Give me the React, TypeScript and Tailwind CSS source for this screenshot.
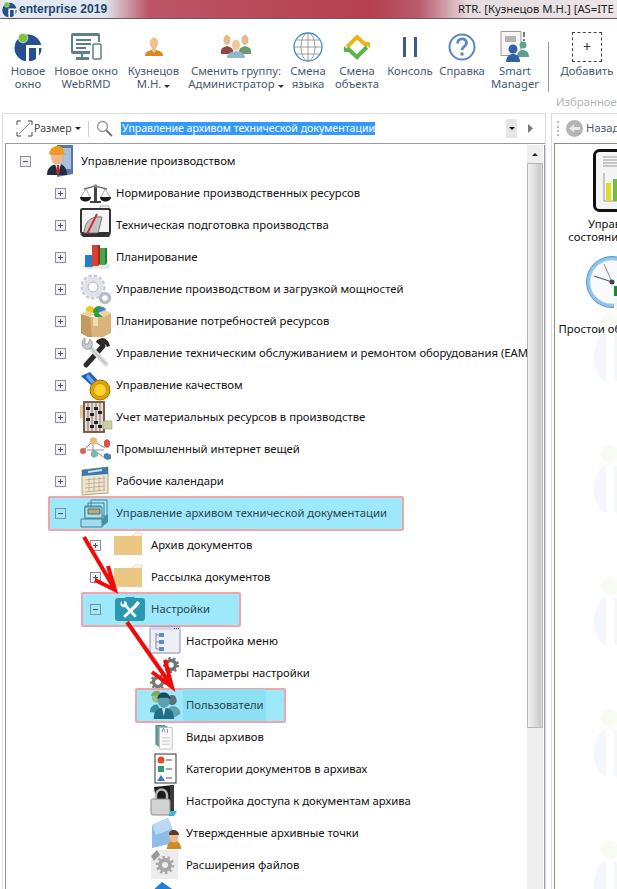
import React from "react";

const Plus = ({ open, tone }: { open?: boolean; tone?: boolean }) => (
  <svg width="11" height="11" viewBox="0 0 11 11" className="shrink-0">
    <rect x="0.5" y="0.5" width="10" height="10" fill={tone ? "#a6e6f5" : "#f2f2f4"} stroke={tone ? "#6d9aa6" : "#8e8e9a"} />
    <path d={open ? "M3 5.5h5" : "M3 5.5h5M5.5 3v5"} stroke="#44566e" fill="none" />
  </svg>
);

const Tri = ({ c = "#222" }: { c?: string }) => (
  <svg width="6" height="3" viewBox="0 0 6 3" className="inline-block shrink-0"><path d="M0 0h6L3 3z" fill={c} /></svg>
);

const I = ({ children }: { children: React.ReactNode }) => (
  <svg width="32" height="32" viewBox="0 0 32 32" className="shrink-0 overflow-visible">{children}</svg>
);

const Worker = () => (<I>
  <path d="M12 0h16v29l-16 3z" fill="#5677a8" /><path d="M14 3h12v21H14z" fill="#a9bfdc" />
  <path d="M2 30c0-8 5-10 10-11s10 3 10 11z" fill="#222c3c" /><path d="M10 19l3 10 3-10z" fill="#f2f2f2" /><path d="M12 20h2l1 8-2 2-2-2z" fill="#b02c2c" />
  <ellipse cx="12" cy="12" rx="6" ry="7.500" fill="#eeb68a" /><path d="M4 9c1-7 6-8 9-8s6 3 6 7l3 1-7 1H6z" fill="#f09a24" />
</I>);
const Scales = () => (<I>
  <path d="M14 9h3v15h-3zM10 24h11v2H10z" fill="#444" /><path d="M4 12l11-3 12 3" stroke="#777" strokeWidth="1.500" fill="none" />
  <path d="M6 12L1 20M6 12l4 8M25 12l-4 8M25 12l5 8" stroke="#888" strokeWidth=".7" />
  <path d="M0 20h11c0 6-11 6-11 0zM20 20h11c0 6-11 6-11 0z" fill="#1b1b1b" /><circle cx="15.500" cy="9" r="1.800" fill="#888" />
</I>);
const Tech = () => (<I>
  <path d="M20-3h9v4h-9z" fill="#fff" stroke="#aaa" />
  <rect x="1" y="0" width="29" height="24" rx="1.500" fill="#f5f5f5" stroke="#333" strokeWidth="2" />
  <path d="M4 24C5 11 12 7 22 8l-4 16z" fill="#c5c5c5" stroke="#777" /><path d="M6 27L17 5" stroke="#cf3030" strokeWidth="2" />
  <path d="M0 25l31-1-2 4H3z" fill="#333" />
</I>);
const Bars = () => (<I>
  <path d="M2 25l6-5h17l6 5-3 3H5z" fill="#e7e7e7" />
  <path d="M5 14h7v12H5z" fill="#1f7fc8" /><path d="M12 14h2v10l-2 2z" fill="#125c94" />
  <path d="M12 4h6v21h-6z" fill="#d8422c" /><path d="M18 4h2v19l-2 2z" fill="#9c2a1a" />
  <path d="M20 7h5v17h-5z" fill="#48a84c" /><path d="M25 7h2v15l-2 2z" fill="#2f7a33" />
</I>);
const Gears = () => (<I>
  <circle cx="13" cy="14" r="9.500" fill="none" stroke="#c6ccd6" strokeWidth="6" strokeDasharray="3 1.500" />
  <circle cx="13" cy="14" r="8" fill="none" stroke="#dfe3ea" strokeWidth="5" /><circle cx="13" cy="14" r="5" fill="#fff" stroke="#a8b0bc" />
  <circle cx="25" cy="25" r="4.500" fill="none" stroke="#b8bec8" strokeWidth="3.500" />
</I>);
const Box = () => (<I>
  <circle cx="10" cy="5" r="4" fill="#e8c91e" /><circle cx="19" cy="7" r="6" fill="#2f9a3c" /><circle cx="22" cy="6" r="4" fill="#3b86d6" />
  <path d="M1 9l9 3h13l8-4v20l-8 4H8L1 28z" fill="#d9b47c" /><path d="M1 9l9 3 2 20H8l-7-4z" fill="#c49a5e" /><path d="M13 12h5v9h-5z" fill="#f1dcb4" />
  <path d="M1 9l6-3 8 2-4 4z" fill="#ecd3a0" /><path d="M31 8l-6-3-7 3 5 4z" fill="#ecd3a0" />
</I>);
const Tools = () => (<I>
  <path d="M6 28L23 9" stroke="#2b2b2b" strokeWidth="5" strokeLinecap="round" /><path d="M17 3l5-2c4 0 7 3 8 8l-3 1-2-3-3 3-6-5z" fill="#2a2a2a" />
  <path d="M9 9l17 18" stroke="#d8dcdf" strokeWidth="5" strokeLinecap="round" /><path d="M10 10l16 17" stroke="#9aa0a6" strokeWidth=".8" />
  <path d="M5 1a6.500 6.500 0 0 0-2 9c2 2.500 5 3 8 1 2-3 2-6-1-9l-2 5H5z" fill="#c8ccd0" stroke="#777" strokeWidth=".6" />
</I>);
const Medal = () => (<I>
  <path d="M1 7L10 3l11 12-6 5z" fill="#1d62c4" /><path d="M8 5l7 8-3 2-6-7z" fill="#6fa5ea" />
  <circle cx="20" cy="21" r="10" fill="#e4a400" stroke="#9a6a00" /><circle cx="20" cy="21" r="6.500" fill="#ffd42a" stroke="#c88c00" />
</I>);
const Abacus = () => (<I>
  <path d="M0 4h6v13H0z" fill="#e8c69a" /><rect x="4" y="1" width="20" height="30" fill="#e8dcd0" stroke="#6f4d3c" strokeWidth="1.800" />
  <path d="M8 2v28M12 2v28M16 2v28M20 2v28" stroke="#777" /><path d="M6 6h4v3H6zM10 12h4v3h-4zM14 6h4v3h-4zM18 10h4v3h-4zM6 17h4v3H6zM14 20h4v3h-4zM10 24h4v3h-4zM18 24h4v3h-4z" fill="#222" />
  <path d="M23 20h9v8h-9z" fill="#cfcf9c" stroke="#888" strokeWidth=".5" />
</I>);
const Net = () => (<I>
  <path d="M3 18L13 8l12 7M13 8v9M7 17h17M13 17l12 8M13 17v6" stroke="#8d8d8d" fill="none" />
  <path d="M10 6l3-2 4 2v4l-4 2-3-2z" fill="#e8b97a" /><path d="M24 8l3-2 3 2v5l-3 2-3-2z" fill="#d9534a" /><circle cx="3" cy="18" r="3" fill="#d9634f" />
  <path d="M11 19l3-2 4 2v4l-4 2-3-2z" fill="#7fb8a8" /><path d="M24 21l3-1 4 2v4l-4 1-3-2z" fill="#4a80b8" />
</I>);
const Cal = () => (<I>
  <path d="M2 5l26-3v26L2 30z" fill="#f0e6cf" stroke="#b89f78" /><path d="M2 5l26-3v7L2 11z" fill="#3a78b4" />
  <path d="M5 15l20-2M5 19l20-2M5 23l20-2M5 27l20-2M9 13v14M14 12v15M19 12v14M24 11v15" stroke="#b3a88f" strokeWidth=".8" fill="none" />
  <path d="M8 6l14-2v2L8 8z" fill="#cfe0f0" />
</I>);
const Archive = () => (<I>
  <g fill="none" stroke="#4d7f92" strokeWidth="1"><path d="M11 3h16v16H11zM8 6h16v16H8zM5 9h16v14H5z" /></g>
  <path d="M5 10h17v11H5z" fill="#a6e6f5" stroke="#4d7f92" /><path d="M8 12h12v5H8z" fill="#c0a870" stroke="#4d6f78" />
  <path d="M1 22h21v8H1z" fill="#9fdef0" stroke="#4d7f92" /><path d="M22 22l6-5v8l-6 5z" fill="#4a8ea4" />
</I>);
const Folder = () => (<I>
  <path d="M-1 7h18l3-3h7v22H-1z" fill="#eac883" /><path d="M17 7l3-3h7v3z" fill="#fff" stroke="#e0c080" strokeWidth=".6" />
</I>);
const Wrench = () => (<I>
  <path d="M3 5h7l1-1h8l1 1h7a3 3 0 0 1 3 3v17a3 3 0 0 1-3 3H3a3 3 0 0 1-3-3V8a3 3 0 0 1 3-3z" fill="#2b97b2" />
  <path d="M7 8a4 4 0 0 0-1 5c1.500 1.500 3 1.500 4 1l9 10c2 1 3-.5 2-2l-9-10c.5-2-1-4-3-4v3H7z" fill="#f4fbfd" />
  <path d="M8 23l11-11 3-4 3 2-3 4L10 25z" fill="#f4fbfd" />
</I>);
const Menu = () => (<I>
  <rect x="0" y="2" width="30" height="26" rx="1" fill="#eeeef6" stroke="#8e8ab0" /><path d="M0 2h30v3H0z" fill="#d8d6ea" /><path d="M24 3.500h1M26 3.500h1M28 3.500h1" stroke="#555" />
  <path d="M6 8v16M6 10h5M6 17h5M6 24h5" stroke="#8a8a9a" fill="none" /><path d="M9 8h5v4H9zM9 15h5v4H9zM9 22h5v4H9z" fill="#5b8fca" />
</I>);
const Cogs = () => (<I>
  <circle cx="21" cy="8" r="4.500" fill="none" stroke="#717171" strokeWidth="3.500" /><circle cx="21" cy="8" r="7" fill="none" stroke="#717171" strokeWidth="2" strokeDasharray="2.500 2.500" />
  <circle cx="8" cy="25" r="4.500" fill="none" stroke="#777" strokeWidth="3.500" /><circle cx="8" cy="25" r="7" fill="none" stroke="#777" strokeWidth="2" strokeDasharray="2.500 2.500" />
</I>);
const Users = () => (<I>
  <g transform="translate(0,1) scale(.92,.85)">
    <ellipse cx="24" cy="12" rx="5" ry="6" fill="#5b6f78" /><path d="M18 30c0-8 3-11 7-11s8 3 8 9l-6 4z" fill="#5fa2ac" />
    <ellipse cx="7" cy="9" rx="5" ry="6" fill="#9bc07e" /><path d="M1 7c1-5 5-6 7-6s4 2 4 5z" fill="#80a866" />
    <path d="M0 26c0-7 4-9 8-9l6 11z" fill="#3d8ca0" />
    <path d="M4 34c0-10 5-13 11-13s11 3 11 13z" fill="#1f6f86" /><path d="M13 21l2 10 2-10z" fill="#bfe4e8" />
    <ellipse cx="15" cy="13" rx="6.500" ry="8" fill="#5aa3ae" /><path d="M8 11c0-6 4-8 7-8s7 2 7 8l-3-2h-8z" fill="#144b5a" />
  </g>
</I>);
const Sheets = () => (<I>
  <g transform="translate(3,4) scale(.8)">
    <path d="M3 0h12v25H3z" fill="#5c86b8" /><path d="M5 1h13v26H5z" fill="#6aa884" /><path d="M8 3h16v27H8z" fill="#fbfbfb" stroke="#b8b8b8" />
    <path d="M11 9l2-5 2 5" stroke="#4a80c0" fill="none" /><path d="M18 5v5" stroke="#d05a50" /><path d="M11 16h10M11 20h10M11 24h10" stroke="#b5b5b5" />
  </g>
</I>);
const Cats = () => (<I>
  <g transform="translate(4,1)">
    <rect x="1" y="0" width="21" height="29" fill="#fff" stroke="#333" />
    <circle cx="7" cy="6" r="3.500" fill="#d9502e" /><path d="M4 12h6v6H4z" fill="#2e9a82" /><path d="M7 21l4 6H3z" fill="#3f78b8" /><path d="M12 6h6M12 15h6M12 24h6" stroke="#555" />
  </g>
</I>);
const Lock = () => (<I>
  <path d="M4 2l20-2v26L8 29z" fill="#1a1a1a" /><path d="M20 0h4v26h-4z" fill="#3a3a3a" />
  <path d="M6 14v-4a5.500 5.500 0 0 1 11 0v4" fill="none" stroke="#b6b6b6" strokeWidth="2.500" /><rect x="1" y="14" width="19" height="16" rx="2" fill="#d2d2d2" stroke="#8c8c8c" />
  <path d="M22 26h5l-3 5h-6z" fill="#37b6d6" />
</I>);
const Points = () => (<I>
  <path d="M2 8L18 1l10 24-26 6z" fill="#8fbde6" /><path d="M2 8l16-7 4 11-16 6z" fill="#b9d8f2" />
  <path d="M17 32c0-6 3-8 7-8s7 2 7 8z" fill="#d08a22" /><ellipse cx="24" cy="20" rx="4.500" ry="5.500" fill="#eeb98c" /><path d="M19 18c0-4 3-5 5-5s5 2 5 5z" fill="#5a3a24" />
</I>);
const FileCog = () => (<I>
  <path d="M1 7l6-6h21v29H1z" fill="#ececec" /><path d="M1 7l6-6 3 5-6 6z" fill="#9a9a9a" />
  <circle cx="15" cy="16" r="5" fill="none" stroke="#a6a6a6" strokeWidth="4" /><circle cx="15" cy="16" r="8" fill="none" stroke="#a6a6a6" strokeWidth="2.500" strokeDasharray="2.500 2.500" />
</I>);
const BlueTop = () => (<I><path d="M0 12L12 1l13 9v22H0z" fill="#1d7fd6" /></I>);

type R = { l: 0 | 1 | 2 | 3; t: string; icon: React.ReactNode; e?: "p" | "m"; hl?: string; inner?: boolean };

const rows: R[] = [
  { l: 0, t: "Управление производством", icon: <Worker />, e: "m" },
  { l: 1, t: "Нормирование производственных ресурсов", icon: <Scales />, e: "p" },
  { l: 1, t: "Техническая подготовка производства", icon: <Tech />, e: "p" },
  { l: 1, t: "Планирование", icon: <Bars />, e: "p" },
  { l: 1, t: "Управление производством и загрузкой мощностей", icon: <Gears />, e: "p" },
  { l: 1, t: "Планирование потребностей ресурсов", icon: <Box />, e: "p" },
  { l: 1, t: "Управление техническим обслуживанием и ремонтом оборудования (EAM)", icon: <Tools />, e: "p" },
  { l: 1, t: "Управление качеством", icon: <Medal />, e: "p" },
  { l: 1, t: "Учет материальных ресурсов в производстве", icon: <Abacus />, e: "p" },
  { l: 1, t: "Промышленный интернет вещей", icon: <Net />, e: "p" },
  { l: 1, t: "Рабочие календари", icon: <Cal />, e: "p" },
  { l: 1, t: "Управление архивом технической документации", icon: <Archive />, e: "m", hl: "left-[42px] w-[356px]" },
  { l: 2, t: "Архив документов", icon: <Folder />, e: "p" },
  { l: 2, t: "Рассылка документов", icon: <Folder />, e: "p" },
  { l: 2, t: "Настройки", icon: <Wrench />, e: "m", hl: "left-[75px] w-[160px]" },
  { l: 3, t: "Настройка меню", icon: <Menu /> },
  { l: 3, t: "Параметры настройки", icon: <Cogs /> },
  { l: 3, t: "Пользователи", icon: <Users />, hl: "left-[129px] w-[151px]", inner: true },
  { l: 3, t: "Виды архивов", icon: <Sheets /> },
  { l: 3, t: "Категории документов в архивах", icon: <Cats /> },
  { l: 3, t: "Настройка доступа к документам архива", icon: <Lock /> },
  { l: 3, t: "Утвержденные архивные точки", icon: <Points /> },
  { l: 3, t: "Расширения файлов", icon: <FileCog /> },
  { l: 3, t: "", icon: <BlueTop /> },
];

const pad = ["pl-[14px]", "pl-[49px]", "pl-[84px]", "pl-[119px]"];

const Row = ({ r }: { r: R }) => (
  <div className={`relative flex h-8 items-center ${pad[r.l]}`}>
    {r.hl && <div className={`absolute top-[-1px] h-[35px] rounded-[2px] border-2 border-[#f0a6a8] bg-[#9de8fb] ${r.hl}`} />}
    {r.inner && <div className="absolute left-[177px] top-0 h-8 w-[83px] bg-[#8ddff3]" />}
    <div className="relative flex w-[11px] shrink-0 items-center">{r.e && <Plus open={r.e === "m"} tone={!!r.hl} />}</div>
    <div className="relative ml-[14px] flex w-[30px] shrink-0 items-center">{r.icon}</div>
    <span className={`relative ml-[6px] whitespace-nowrap text-[11.3px] ${r.hl ? "text-[#2c4650]" : "text-[#111]"}`}>{r.t}</span>
  </div>
);

const Tool = ({ w, icon, a, b, caret }: { w: string; icon: React.ReactNode; a: string; b?: string; caret?: boolean }) => (
  <div className={`flex shrink-0 flex-col items-center pt-[11px] ${w}`}>
    <div className="flex h-[33px] items-center justify-center">{icon}</div>
    <div className="mt-px text-center text-[11.3px] leading-[13px] text-[#4a5a70] whitespace-nowrap">
      <div>{a}</div>
      {b && <div>{b}{caret && <span className="ml-[3px] inline-block align-middle"><Tri c="#333" /></span>}</div>}
    </div>
  </div>
);

const Logo = ({ s = 28 }: { s?: number }) => (
  <svg width={s} height={s} viewBox="0 0 28 28">
    <circle cx="14" cy="15" r="13.500" fill="#24508f" />
    <path d="M12 12h16v3H25v14h-3V15h-7v14h-3z" fill="#fff" />
    <circle cx="9" cy="5" r="4.800" fill="#7fc241" stroke="#fff" strokeWidth=".6" />
  </svg>
);

const WebRmd = () => (
  <svg width="32" height="27" viewBox="0 0 32 27">
    <path d="M3 0h25a2 2 0 0 1 2 2v7h-2V3H3v15h17v3h-7v3h6v3H6v-3h5v-3H3a2 2 0 0 1-2-2V2a2 2 0 0 1 2-2z" fill="#5d7f91" />
    <path d="M6 6h15v2H6zM6 10h15v2H6zM6 14h10v2H6z" fill="#5d7f91" />
    <rect x="23" y="11" width="8" height="15" rx="1" fill="#fff" stroke="#5d7f91" strokeWidth="1.500" />
  </svg>
);
const Person = () => (
  <svg width="20" height="20" viewBox="0 0 20 20">
    <path d="M1 19c0-4 3-5 9-7 6 2 9 3 9 7z" fill="#d68a1e" />
    <ellipse cx="10" cy="6" rx="4" ry="5.500" fill="#efc08e" /><path d="M8 10h4v4l-2 2-2-2z" fill="#efc08e" />
  </svg>
);
const Group = () => (
  <svg width="30" height="24" viewBox="0 0 30 24">
    <path d="M0 16c0-3 3-4 6-5 3 1 6 2 6 5v3H0z" fill="#924645" /><ellipse cx="6" cy="5" rx="3.500" ry="5" fill="#e4bb8c" />
    <path d="M18 16c0-3 3-4 6-5 3 1 6 2 6 5v3H18z" fill="#6d9a74" /><ellipse cx="24" cy="5" rx="3.500" ry="5" fill="#e4bb8c" />
    <path d="M6 23c0-5 4-6 9-7 5 1 9 2 9 7z" fill="#8eb8cc" /><ellipse cx="15" cy="10" rx="4" ry="5.500" fill="#eec79c" />
  </svg>
);
const Globe = () => (
  <svg width="30" height="30" viewBox="0 0 30 30" fill="none" stroke="#3d8fd0">
    <circle cx="15" cy="15" r="14" strokeWidth="1.300" /><ellipse cx="15" cy="15" rx="7" ry="14" stroke="#888" strokeWidth=".8" /><path d="M15 1v28M1 15h28M3 8h24M3 22h24" stroke="#888" strokeWidth=".8" />
  </svg>
);
const Obj = () => (
  <svg width="28" height="28" viewBox="0 0 28 28" fill="none">
    <path d="M4 14L14 4l10 9" stroke="#e8b619" strokeWidth="4" /><path d="M20 9h7l0 6z" fill="#e8b619" />
    <path d="M24 14L14 24 4 15" stroke="#5cb54a" strokeWidth="4" /><path d="M8 19H1l0-6z" fill="#5cb54a" />
  </svg>
);
const Pause = () => (
  <svg width="14" height="20" viewBox="0 0 14 20"><path d="M0 0h3v20H0zM11 0h3v20h-3z" fill="#40588e" /></svg>
);
const Help = () => (
  <svg width="28" height="28" viewBox="0 0 28 28">
    <circle cx="14" cy="14" r="12.500" fill="#fff" stroke="#5a87c8" strokeWidth="2" />
    <path d="M9.500 10.500c.5-6 9-6 9 -.5 0 3.500-4.500 3.500-4.500 7" fill="none" stroke="#5a87c8" strokeWidth="2.800" /><circle cx="14" cy="21" r="1.800" fill="#5a87c8" />
  </svg>
);
const Smart = () => (
  <svg width="30" height="31" viewBox="0 0 30 31">
    <path d="M1 .5h20v24H1z" fill="#f5f5f5" stroke="#999" /><path d="M5 5h11v6H5z" fill="#b5b5b5" /><path d="M23 1h2v5h-2zM23 8h2v2h-2z" fill="#777" />
    <path d="M17 26c0-5 3-7 6-7s6 2 6 7z" fill="#5fa08e" /><circle cx="23" cy="14" r="3.500" fill="#5fa08e" />
    <path d="M6 31c0-6 4-8 7-8s7 2 7 8z" fill="#2f62a8" /><circle cx="13" cy="18" r="4.500" fill="#2f62a8" />
  </svg>
);
const Add = () => (
  <div className="flex h-[30px] w-[30px] items-center justify-center border border-dashed border-[#444] text-[14px] leading-none text-[#333]">+</div>
);

const Mark = () => (
  <svg width="40" height="70" viewBox="0 0 40 70" className="block">
    <circle cx="30" cy="9" r="9" fill="#f8fbf1" />
    <path d="M14 44c0-14 6-22 12-24v48C19 66 14 56 14 44z" fill="#f4f7fc" /><path d="M34 20c4 1 6 2 6 3v44l-6 1z" fill="#f4f7fc" />
  </svg>
);

export default function App() {
  return (
    <div className="relative flex h-[889px] w-[617px] flex-col overflow-hidden bg-white font-['Noto_Sans',sans-serif]">
      <div className="relative flex h-[19px] shrink-0 items-center border-b border-[#6b5a60] bg-[linear-gradient(90deg,#e4ebf2_0%,#dfe6ee_17%,#bb5566_24%,#b5404f_60%,#b85c6c_68%,#e6dde0_76%,#ece4e6_100%)]">
        <div className="flex items-center pl-[2px]">
          <Logo s={15} />
          <span className="ml-[2px] font-['Liberation_Sans',sans-serif] text-[12px] font-bold leading-none text-[#25466e]">enterprise 2019</span>
        </div>
        <span className="absolute left-[458px] top-0 whitespace-nowrap text-[11.3px] leading-[18px] text-[#222]">RTR. [Кузнецов М.Н.] [AS=ITE</span>
      </div>

      <div className="flex h-[94px] shrink-0 bg-white">
        <Tool w="w-[56px]" icon={<Logo />} a="Новое" b="окно" />
        <Tool w="w-[60px]" icon={<WebRmd />} a="Новое окно" b="WebRMD" />
        <Tool w="w-[72px] pl-[3px]" icon={<Person />} a="Кузнецов" b="М.Н." caret />
        <Tool w="w-[96px]" icon={<Group />} a="Сменить группу:" b="Администратор" caret />
        <Tool w="w-[48px]" icon={<Globe />} a="Смена" b="языка" />
        <Tool w="w-[50px]" icon={<Obj />} a="Смена" b="объекта" />
        <Tool w="w-[56px]" icon={<Pause />} a="Консоль" />
        <Tool w="w-[48px]" icon={<Help />} a="Справка" />
        <Tool w="w-[58px]" icon={<Smart />} a="Smart" b="Manager" />
        <div className="ml-[4px] mt-[23px] h-[50px] w-px shrink-0 bg-[#999]" />
        <div className="ml-[4px] flex shrink-0 flex-col">
          <Tool w="w-[68px]" icon={<Add />} a="Добавить" />
          <div className="ml-[3px] mt-[18px] whitespace-nowrap text-[11.3px] leading-[14px] text-[#b5b5b5]">Избранное</div>
        </div>
      </div>

      <div className="flex min-h-0 flex-1 pl-[2px]">
        <div className="flex w-[544px] shrink-0 flex-col border border-b-0 border-[#dcdcdc]">
          <div className="flex h-[29px] shrink-0 items-center pl-[13px]">
            <svg width="17" height="17" viewBox="0 0 17 17" fill="none" stroke="#444" className="shrink-0"><path d="M1 5V1h4M12 1h4v4M16 12v4h-4M5 16H1v-4" /><path d="M3 14L14 3" stroke="#888" /></svg>
            <span className="ml-px w-[37px] shrink-0 whitespace-nowrap text-[10.6px] text-[#444]">Размер</span>
            <span className="ml-[4px] flex w-[6px] shrink-0"><Tri /></span>
            <div className="ml-[7px] h-[16px] w-px shrink-0 bg-[#c8d0d8]" />
            <svg className="ml-[7px] shrink-0" width="17" height="17" viewBox="0 0 17 17" fill="none"><circle cx="6.500" cy="6.500" r="5" stroke="#999" strokeWidth="1.300" /><path d="M10 10l6 6" stroke="#777" strokeWidth="2" /></svg>
            <div className="ml-[8px] flex h-[13px] w-[254px] shrink-0 items-center bg-[#3399ff] pl-px text-[10.55px] leading-none text-white whitespace-nowrap">Управление архивом технической документации</div>
            <div className="ml-[131px] flex h-[19px] w-[11px] shrink-0 items-center justify-center bg-[#e4e6ea]"><Tri c="#111" /></div>
            <svg className="ml-[11px] shrink-0" width="5" height="9" viewBox="0 0 5 9"><path d="M0 0l5 4.500L0 9z" fill="#777" /></svg>
          </div>
          <div className="ml-[2px] flex min-h-0 flex-1 border-l border-t border-[#9a9a9a] pt-px">
            <div className="min-w-0 flex-1 overflow-hidden">{rows.map((r, i) => <Row key={i} r={r} />)}</div>
            <div className="flex w-[16px] shrink-0 flex-col bg-[#efefef]">
              <div className="flex h-[18px] items-center justify-center"><svg width="6" height="3" viewBox="0 0 6 3"><path d="M0 3h6L3 0z" fill="#222" /></svg></div>
              <div className="h-[565px] rounded-b-[1px] border border-[#b5b5b5] bg-[linear-gradient(90deg,#f2f2f2,#dcdcdc_55%,#c8c8c8_85%,#e0e0e0)]" />
            </div>
            <div className="w-[2px] shrink-0 border-r border-[#9a9aa8]" />
          </div>
        </div>

        <div className="ml-[5px] flex w-[120px] shrink-0 flex-col border-l border-t border-[#dcdcdc]">
          <div className="flex h-[29px] shrink-0 items-center pl-[5px]">
            <div className="h-[15px] w-[3px] border-l-2 border-dotted border-[#bbb]" />
            <svg className="ml-[6px]" width="17" height="17" viewBox="0 0 17 17"><circle cx="8.500" cy="8.500" r="8.500" fill="#b5b5b5" /><path d="M3 8.500l5-4v2.500h6v3H8v2.500z" fill="#e8e8e8" /></svg>
            <span className="ml-[3px] text-[11.3px] text-[#4a5a70]">Назад</span>
          </div>
          <div className="relative ml-[2px] min-h-0 flex-1 overflow-hidden border-l border-t border-[#8c8c8c]">
            <div className="absolute left-[25px] top-[169px] flex flex-col gap-[62px]">
              <Mark /><Mark /><Mark /><Mark /><Mark />
            </div>
            <div className="relative flex w-[132px] flex-col items-center text-center text-[11.3px] leading-[13px] text-[#111]">
              <svg className="mt-[5px] ml-[8px]" width="64" height="63" viewBox="0 0 64 63">
                <rect x="1.500" y="1.500" width="61" height="60" rx="5" fill="#f4f4f4" stroke="#111" strokeWidth="3" />
                <path d="M10 8h46M10 11h46M10 14h46M10 17h46" stroke="#999" />
                <path d="M11 24v28h46" stroke="#999" fill="none" />
                <path d="M13 34h5v18h-5z" fill="#dcdc2c" /><path d="M20 30h5v22h-5z" fill="#78bc3c" /><path d="M27 37h5v15h-5z" fill="#dcdc2c" /><path d="M34 32h5v20h-5z" fill="#78bc3c" />
              </svg>
              <div className="mt-[5px] whitespace-nowrap">Управление</div>
              <div className="whitespace-nowrap">состоянием склада</div>
              <svg className="-ml-[6px] mt-[13px]" width="64" height="62" viewBox="0 0 64 62">
                <circle cx="26" cy="26" r="25.500" fill="#8cc4ee" stroke="#5a9ad0" />
                <circle cx="26" cy="26" r="22" fill="#f8fafc" stroke="#c0d4e6" />
                <path d="M26 26L8 20" stroke="#555" strokeWidth="1.200" /><path d="M26 26L18 8" stroke="#888" />
                <circle cx="26" cy="26" r="2.500" fill="#444" />
                <path d="M28 30h36v10H28z" fill="#1a8a28" />
                <path d="M28 42h36v12H28z" fill="#f4f4f4" />
              </svg>
              <div className="ml-[3px] mt-[4px] whitespace-nowrap">Простои оборудования</div>
            </div>
          </div>
        </div>
      </div>

      <svg className="pointer-events-none absolute left-0 top-0" width="617" height="889" viewBox="0 0 617 889" fill="none" stroke="#f00a0a" strokeWidth="4">
        <path d="M84 537L114 588M108 566L115 590L95 580" />
        <path d="M127 622L171 685M165 660L172 687L152 672" />
      </svg>
    </div>
  );
}
